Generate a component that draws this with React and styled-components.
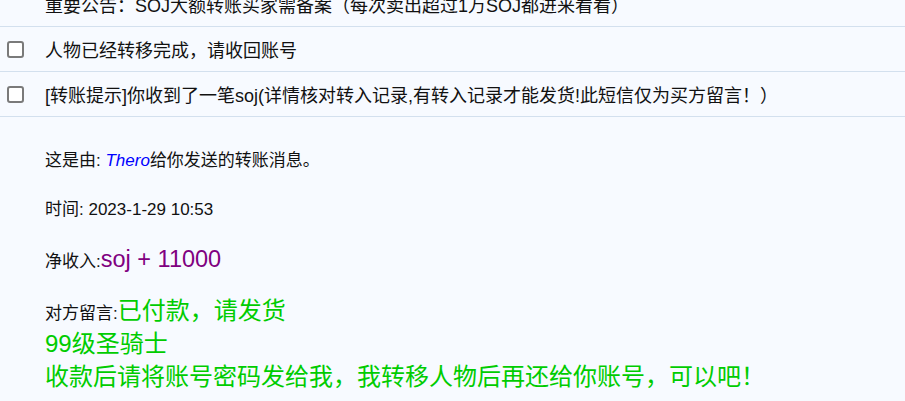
import React from 'react';
import styled, { createGlobalStyle } from 'styled-components';

const GlobalStyle = createGlobalStyle`
  body {
    margin: 0;
    background: #f7faff;
    font-family: "Liberation Sans", "Noto Sans CJK SC", sans-serif;
    color: #111;
    overflow: hidden;
  }
`;

const Page = styled.div`
  width: 905px;
  height: 401px;
  overflow: hidden;
  background: #f7faff;
`;

// the list is scrolled a little: the first row is cut at the top
const List = styled.div`
  margin-top: -18px;
`;

const Row = styled.div`
  display: flex;
  align-items: center;
  height: 44px;
  border-bottom: 1px solid #d3e0ee;
  font-size: 18px;
  white-space: nowrap;
`;

const CheckCell = styled.div`
  width: 45px;
  flex: 0 0 45px;
  display: flex;
  align-items: center;
  padding-left: 7px;
  box-sizing: border-box;
`;

const Box = styled.span`
  display: block;
  width: 13px;
  height: 13px;
  border: 2px solid #7a7a7a;
  border-radius: 3px;
  background: #fff;
`;

const Detail = styled.div`
  padding: 32px 0 0 45px;
  font-size: 17px;
`;

const Para = styled.p`
  margin: 0 0 ${p => p.$after || 25}px;
  line-height: 24px;
  white-space: nowrap;
`;

const Sender = styled.i`
  color: #0000ff;
`;

const Amount = styled.span`
  color: #800080;
  font-size: 23.5px;
`;

const Message = styled.div`
  line-height: 30px;
  white-space: nowrap;
`;

const Green = styled.span`
  color: #00cc00;
  font-size: 24px;
`;

const items = [
  { id: 1, text: '重要公告：SOJ大额转账买家需备案（每次卖出超过1万SOJ都进来看看）', check: false },
  { id: 2, text: '人物已经转移完成，请收回账号', check: true },
  { id: 3, text: '[转账提示]你收到了一笔soj(详情核对转入记录,有转入记录才能发货!此短信仅为买方留言！）', check: true },
];

const App = () => (
  <Page>
    <GlobalStyle />
    <List>
      {items.map(item =>
        <Row key={item.id}>
          <CheckCell>{item.check && <Box />}</CheckCell>
          {item.text}
        </Row>
      )}
    </List>
    <Detail>
      <Para>这是由: <Sender>Thero</Sender>给你发送的转账消息。</Para>
      <Para>时间: 2023-1-29 10:53</Para>
      <Para $after={22}>净收入:<Amount>soj + 11000</Amount></Para>
      <Message>
        对方留言:<Green>已付款，请发货<br />99级圣骑士<br />收款后请将账号密码发给我，我转移人物后再还给你账号，可以吧！</Green>
      </Message>
    </Detail>
  </Page>
);

export default App;
